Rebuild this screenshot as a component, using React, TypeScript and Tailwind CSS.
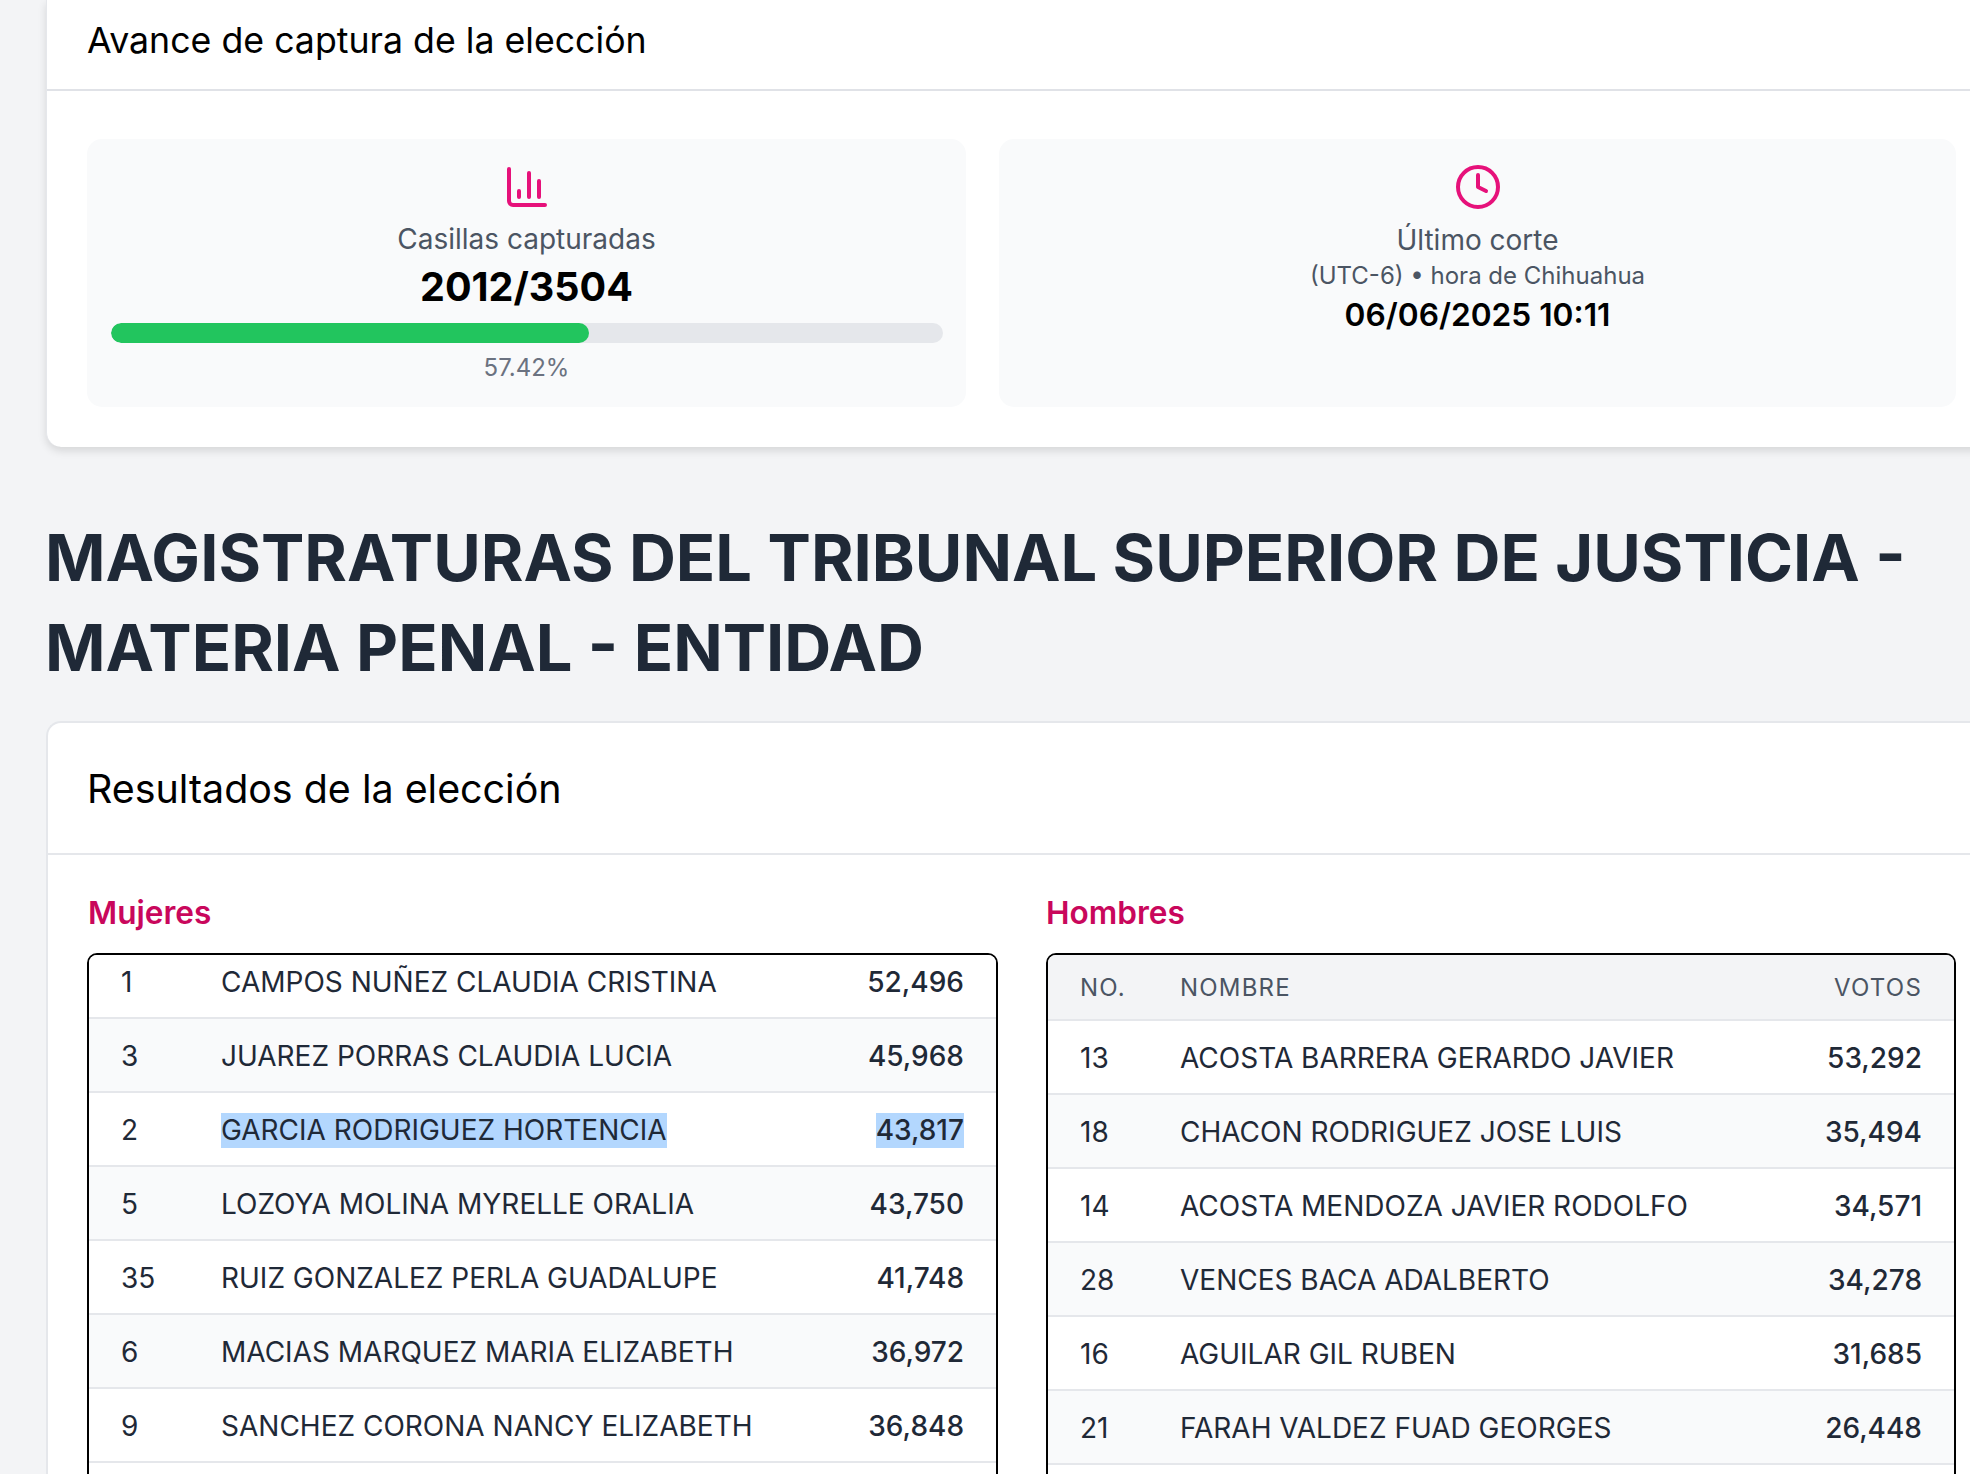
import { ChartColumn, Clock } from "lucide-react";

type R = [string, string, string, boolean?];

const mujeres: R[] = [
  ["1", "CAMPOS NUÑEZ CLAUDIA CRISTINA", "52,496"],
  ["3", "JUAREZ PORRAS CLAUDIA LUCIA", "45,968"],
  ["2", "GARCIA RODRIGUEZ HORTENCIA", "43,817", true],
  ["5", "LOZOYA MOLINA MYRELLE ORALIA", "43,750"],
  ["35", "RUIZ GONZALEZ PERLA GUADALUPE", "41,748"],
  ["6", "MACIAS MARQUEZ MARIA ELIZABETH", "36,972"],
  ["9", "SANCHEZ CORONA NANCY ELIZABETH", "36,848"],
];
const hombres: R[] = [
  ["13", "ACOSTA BARRERA GERARDO JAVIER", "53,292"],
  ["18", "CHACON RODRIGUEZ JOSE LUIS", "35,494"],
  ["14", "ACOSTA MENDOZA JAVIER RODOLFO", "34,571"],
  ["28", "VENCES BACA ADALBERTO", "34,278"],
  ["16", "AGUILAR GIL RUBEN", "31,685"],
  ["21", "FARAH VALDEZ FUAD GEORGES", "26,448"],
];

function Row({ row, i }: { row: R; i: number }) {
  const [n, name, votes, sel] = row;
  return (
    <div className={`flex h-[74px] items-center border-b-2 border-[#e5e7eb] px-[32px] pt-[1px] text-[28px] text-[#1f2937] ${i % 2 ? "bg-[#f9fafb]" : "bg-white"}`}>
      <div className="w-[100px] shrink-0">{n}</div>
      <div className="flex-1">
        <span className={sel ? "inline-block bg-[#b3d7fe] leading-[35px]" : ""}>{name}</span>
      </div>
      <div className="font-medium">
        <span className={sel ? "inline-block bg-[#b3d7fe] leading-[35px]" : ""}>{votes}</span>
      </div>
    </div>
  );
}

export default function App() {
  return (
    <div className="h-[1474px] w-[1970px] overflow-hidden bg-[#f3f4f6] pl-[46px] font-['Inter',sans-serif]">
      <div className="w-[1950px] rounded-b-[15px] border-l border-[#e5e7eb] bg-white shadow-[0_4px_8px_rgba(0,0,0,0.12)]">
        <div className="flex h-[91px] items-center border-b-2 border-[#e0e2e7] pb-[7px] pl-[40px] text-[35.7px] text-black">
          Avance de captura de la elección
        </div>
        <div className="flex gap-[33px] pb-[40px] pl-[40px] pt-[48px]">
          <div className="flex h-[268px] w-[879px] flex-col items-center rounded-[15px] bg-[#f9fafb] px-[24px] pt-[24px]">
            <ChartColumn size={48} strokeWidth={2} className="text-[#e6117a]" />
            <div className="mt-[10px] text-[28px] leading-[36px] text-[#4b5563]">Casillas capturadas</div>
            <div className="mt-[2px] text-[39.5px] font-bold leading-[56px] text-black">2012/3504</div>
            <div className="mt-[8px] h-[20px] w-[832px] overflow-hidden rounded-full bg-[#e5e7eb]">
              <div className="h-full w-[57.5%] rounded-full bg-[#22c55e]" />
            </div>
            <div className="mt-[10px] text-[24px] leading-[30px] text-[#6b7280]">57.42%</div>
          </div>
          <div className="flex h-[268px] w-[957px] flex-col items-center rounded-[15px] bg-[#f9fafb] px-[24px] pt-[24px]">
            <Clock size={48} strokeWidth={2} className="text-[#e6117a]" />
            <div className="mt-[11px] text-[28px] leading-[36px] text-[#4b5563]">Último corte</div>
            <div className="text-[24px] leading-[36px] text-[#4b5563]">(UTC-6) • hora de Chihuahua</div>
            <div className="text-[31.7px] font-semibold leading-[42px] text-black">06/06/2025 10:11</div>
          </div>
        </div>
      </div>

      <h1 className="-ml-px mt-[66px] w-[1900px] text-[65px] font-bold leading-[90px] text-[#1f2937]">
        MAGISTRATURAS DEL TRIBUNAL SUPERIOR DE JUSTICIA - MATERIA PENAL - ENTIDAD
      </h1>

      <div className="mt-[28px] w-[1950px] rounded-t-[15px] border-l-2 border-t-2 border-[#e5e7eb] bg-white">
        <div className="flex h-[132px] items-center border-b-2 border-[#e5e7eb] pl-[39px] pt-[3px] text-[39.4px] text-black">
          Resultados de la elección
        </div>
        <div className="flex gap-[48px] pl-[39px] pt-[37px]">
          <div className="w-[911px]">
            <div className="pl-px text-[31.6px] font-semibold leading-[42px] text-[#c9075c]">Mujeres</div>
            <div className="mt-[19px] h-[600px] overflow-hidden rounded-[10px] border-2 border-black">
              <div className="-mt-[10px]">
                {mujeres.map((r, i) => (
                  <Row key={r[0]} row={r} i={i} />
                ))}
              </div>
            </div>
          </div>
          <div className="w-[910px]">
            <div className="text-[31.6px] font-semibold leading-[42px] text-[#c9075c]">Hombres</div>
            <div className="mt-[19px] h-[600px] overflow-hidden rounded-[10px] border-2 border-black">
              <div className="flex h-[66px] items-center border-b-2 border-[#e5e7eb] bg-[#f3f4f6] px-[32px] pt-[2px] text-[24px] uppercase tracking-wider text-[#4b5563]">
                <div className="w-[100px] shrink-0">No.</div>
                <div className="flex-1">Nombre</div>
                <div>Votos</div>
              </div>
              {hombres.map((r, i) => (
                <Row key={r[0]} row={r} i={i} />
              ))}
            </div>
          </div>
        </div>
      </div>
    </div>
  );
}
